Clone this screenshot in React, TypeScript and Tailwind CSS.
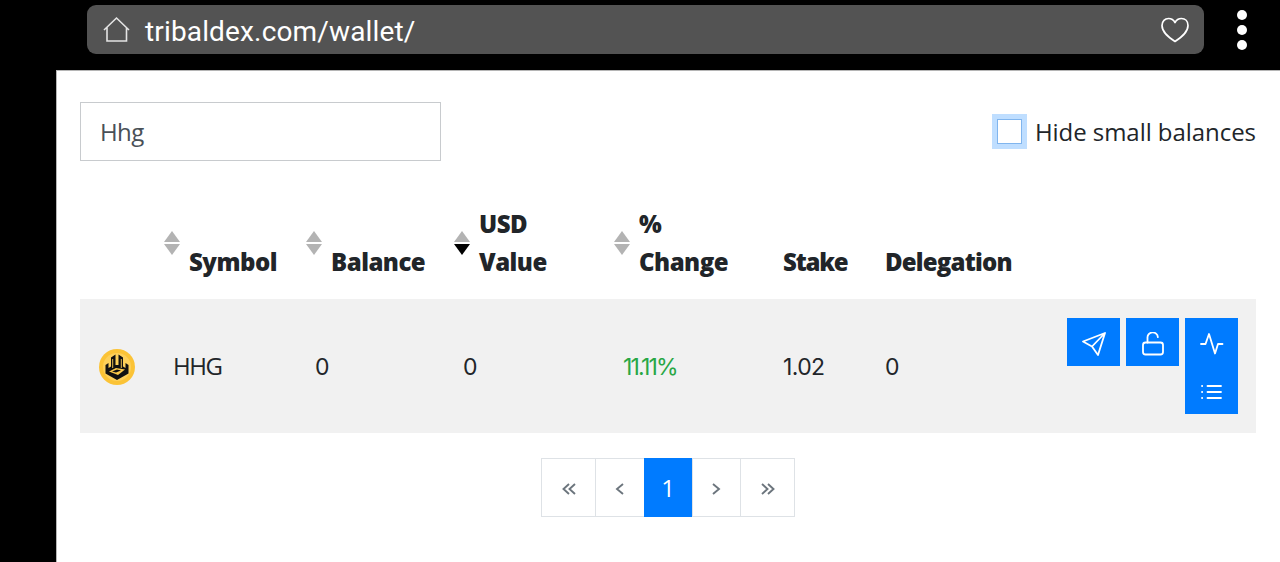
import { useState } from 'react'
import type { ReactNode } from 'react'

type SortDir = 'asc' | 'desc' | null

function Sorter({ dir }: { dir: SortDir }) {
  return (
    <svg className="w-4 h-6 shrink-0" viewBox="0 0 16 24">
      <path d="M8 0l8 11H0z" fill={dir === 'asc' ? '#000' : '#b3b3b3'} />
      <path d="M0 13h16l-8 11z" fill={dir === 'desc' ? '#000' : '#b3b3b3'} />
    </svg>
  )
}

function SortHeader({ dir = null, children }: { dir?: SortDir; children: ReactNode }) {
  return (
    <div className="flex items-center gap-[9px] pl-[10px] h-[75px]">
      <Sorter dir={dir} />
      <div className="self-end">{children}</div>
    </div>
  )
}

function ActionButton({ label, children }: { label: string; children: ReactNode }) {
  return (
    <button type="button" aria-label={label} className="w-[53px] h-12 pt-[3px] flex items-center justify-center bg-[#007bff] text-white">
      <svg className="w-6 h-6" viewBox="0 0 24 24" fill="none" stroke="currentColor" strokeWidth="1.800" strokeLinecap="round" strokeLinejoin="round">
        {children}
      </svg>
    </button>
  )
}

function TokenLogo() {
  return (
    <svg className="w-9 h-9 mt-[2px]" viewBox="0 0 36 36">
      <circle cx="18" cy="18" r="18" fill="#fbc336" />
      <circle cx="18" cy="18" r="14" fill="#fdd05a" />
      <path d="M6.500 16l3-2v5l2.500-1.500V8.500l4.500-3V16l3 0V5.500l4.500 3v9L26.500 19v-5l3 2v8.500L18 31 6.500 24.500z" fill="#111" />
      <path d="M13.700 10v9M22.300 10v9M18 5v10" stroke="#fdd05a" strokeWidth=".9" />
      <path d="M10 22.500l7-3.500 9 1.500-7 5.500z" fill="#fbc94b" />
      <path d="M13 22.500l5-2 4 1-5 2z" fill="#111" />
    </svg>
  )
}

const pages = [
  { label: '«', width: 'w-[54px]' },
  { label: '‹', width: 'w-[49px]' },
  { label: '1', width: 'w-12' },
  { label: '›', width: 'w-12' },
  { label: '»', width: 'w-[55px]' },
]

function PageArrow({ label }: { label: string }) {
  const paths: Record<string, string> = {
    '«': 'M10 6l-5.500 5 5.500 5M16 6l-5.500 5 5.500 5',
    '‹': 'M13 6l-6 5 6 5',
    '›': 'M6 6l6 5-6 5',
    '»': 'M4 6l5.500 5L4 16M10 6l5.500 5L10 16',
  }
  return (
    <svg className="w-5 h-5" viewBox="0 0 20 20" fill="none" stroke="#6c757d" strokeWidth="1.900">
      <path d={paths[label]} />
    </svg>
  )
}

const columns = 'grid grid-cols-[74px_142px_148px_160px_160px_102px_1fr]'

export default function App() {
  const [filter, setFilter] = useState('Hhg')
  const [hideSmall, setHideSmall] = useState(false)

  return (
    <div className="w-[1280px] h-[562px] flex flex-col overflow-hidden bg-black font-['Open_Sans',sans-serif] text-[#212529]">
      <header className="h-[70px] shrink-0 flex items-start pt-[5px] pl-[87px]">
        <div className="w-[1117px] h-[49px] flex items-center rounded-[9px] bg-[#535353] pl-4 pr-[14px] text-white">
          <svg className="w-7 h-7 shrink-0" viewBox="0 0 28 28" fill="none" stroke="#e4e4e4" strokeWidth="1.600">
            <path d="M1 14L13.500 2 26 14M4 11.500V25h19.500V11.500" />
          </svg>
          <span className="ml-[14px] pt-1 flex-1 font-[Roboto,sans-serif] text-[28px] leading-none tracking-[0.15px]">tribaldex.com/wallet/</span>
          <svg className="w-[30px] h-7" viewBox="0 0 30 28" fill="none" stroke="currentColor" strokeWidth="1.700" strokeLinejoin="round">
            <path d="M15 25.500C9 21.500 2 16.500 2 9.500 2 5 5 2.500 8.500 2.500c3 0 5.200 1.500 6.500 4 1.300-2.500 3.500-4 6.500-4C25 2.500 28 5 28 9.500 28 16.500 21 21.500 15 25.500z" />
          </svg>
        </div>
        <div className="ml-[33px] mt-[5px] flex flex-col gap-[5px]">
          <span className="size-[10px] rounded-full bg-white" />
          <span className="size-[10px] rounded-full bg-white" />
          <span className="size-[10px] rounded-full bg-white" />
        </div>
      </header>

      <main className="ml-14 flex-1 border-t border-l border-[#b5b5b5] bg-white pl-[23px] pr-6 pt-[31px]">
        <div className="flex items-center justify-between">
          <input
            value={filter}
            onChange={(e) => setFilter(e.target.value)}
            className="w-[361px] h-[59px] border border-[#c8cbce] px-[19px] text-[24px] font-medium tracking-[-0.6px] text-[#495057] outline-none"
          />
          <label className="flex items-center gap-2 text-[24px] leading-none">
            <input
              type="checkbox"
              checked={hideSmall}
              onChange={(e) => setHideSmall(e.target.checked)}
              className="size-[25px] m-[5px] appearance-none border border-[#80b5ee] bg-white ring-[5px] ring-[#bfdeff]"
            />
            <span className="whitespace-nowrap font-medium tracking-[-0.05px]">Hide small balances</span>
          </label>
        </div>

        <div className={`${columns} mt-[44px] h-[94px] items-start text-[24px] leading-[37.500px] font-extrabold tracking-[-0.5px]`}>
          <div />
          <SortHeader>Symbol</SortHeader>
          <SortHeader>Balance</SortHeader>
          <SortHeader dir="desc">USD<br />Value</SortHeader>
          <SortHeader>%<br />Change</SortHeader>
          <div className="h-[75px] flex items-end pl-[19px] tracking-[-1.200px]">Stake</div>
          <div className="h-[75px] flex items-end pl-[19px] tracking-[-0.8px]">Delegation</div>
        </div>

        <div className={`${columns} h-[134px] items-center bg-[#f1f1f1] font-[Inter,sans-serif] text-[23px]`}>
          <div className="pl-[19px]"><TokenLogo /></div>
          <div className="pl-[19px] font-['Open_Sans',sans-serif] text-[24px] font-medium tracking-[-1.500px]">HHG</div>
          <div className="pl-[19px] pt-[2px]">0</div>
          <div className="pl-[19px] pt-[2px]">0</div>
          <div className="pl-[19px] pt-[2px] tracking-[-1.800px] text-[#28a745]">11.11%</div>
          <div className="pl-[19px] pt-[2px] tracking-[-0.6px]">1.02</div>
          <div className="flex items-center justify-between pl-[19px] pr-[18px]">
            <span className="pt-[2px]">0</span>
            <div className="flex items-start gap-[6px]">
              <ActionButton label="Send">
                <path d="M23 1L1 9.500l9 5 6 8.500L23 1zM23 1L10 14.500" />
              </ActionButton>
              <ActionButton label="Unstake">
                <rect x="2" y="10.500" width="20" height="12" rx="2.500" />
                <path d="M6.500 10.500V6a5.200 5.200 0 0 1 10.400-.8" />
              </ActionButton>
              <div>
                <ActionButton label="Activity">
                  <path d="M1 12h4.500L9 2l6 19.500 3-9.500h4.500" />
                </ActionButton>
                <ActionButton label="Orders">
                  <path d="M7.500 6H21M7.500 12H21M7.500 18H21M2 6h.2M2 12h.2M2 18h.2" />
                </ActionButton>
              </div>
            </div>
          </div>
        </div>

        <nav className="mt-[25px] ml-[461px] flex h-[59px]">
          {pages.map((page) => (
            <button
              key={page.label}
              type="button"
              className={`${page.width} flex items-center justify-center border-y text-[24px] font-medium ${
                page.label === '1'
                  ? 'border-[#007bff] bg-[#007bff] text-white'
                  : 'border-l border-[#dee2e6] last:border-r'
              }`}
            >
              {page.label === '1' ? page.label : <PageArrow label={page.label} />}
            </button>
          ))}
        </nav>
      </main>
    </div>
  )
}
